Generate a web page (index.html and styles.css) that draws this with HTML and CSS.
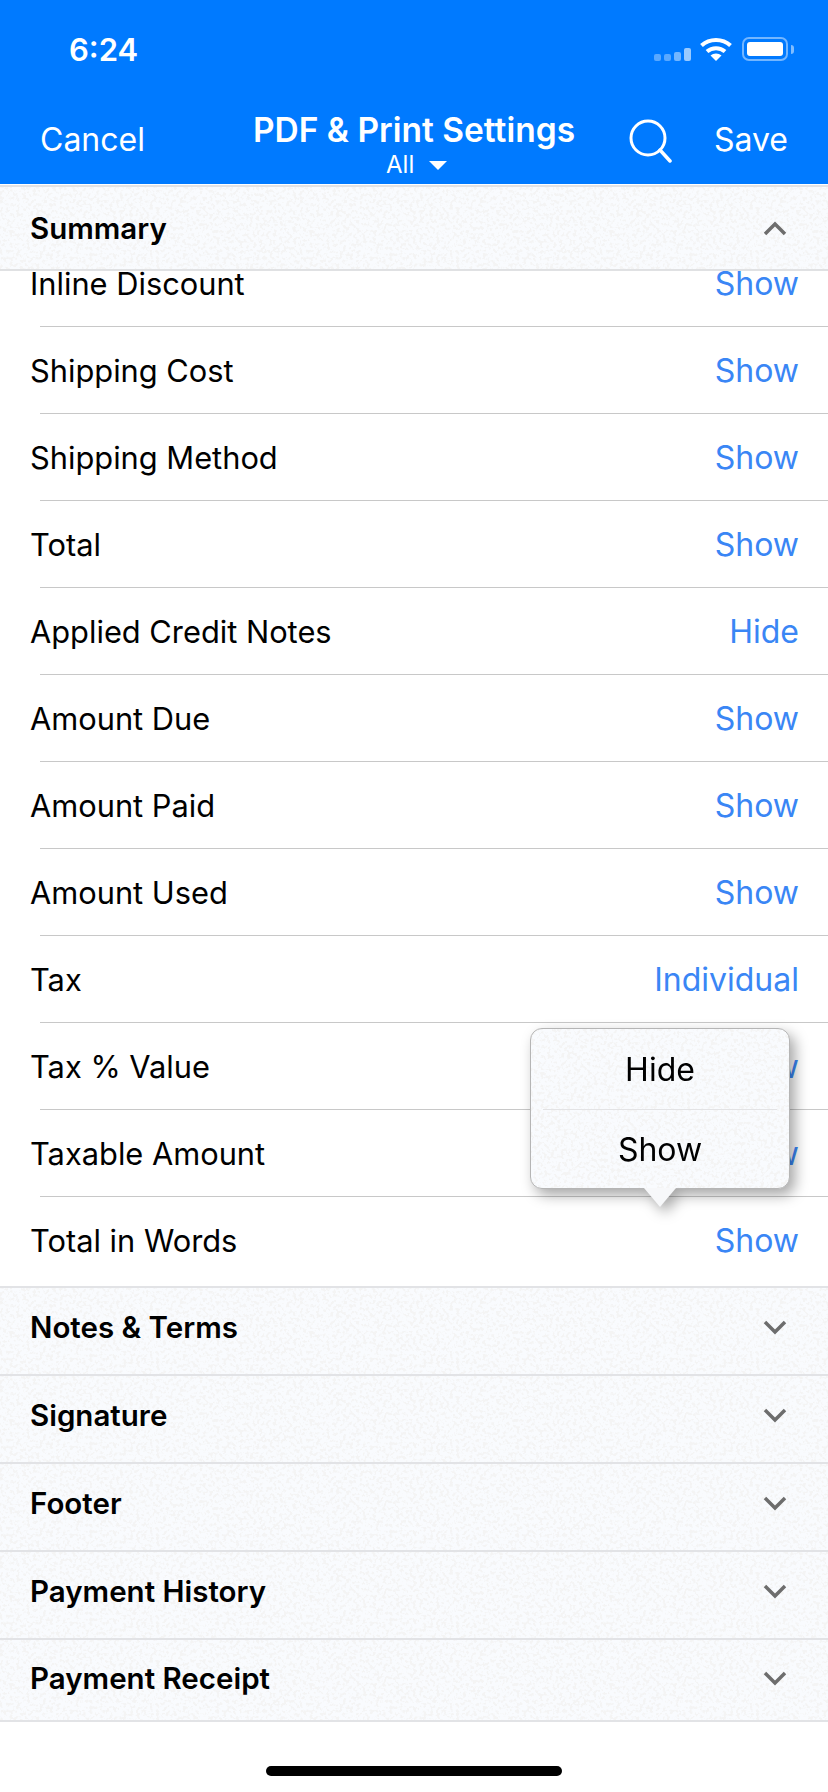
FILE: index.html
```html
<!DOCTYPE html>
<html>
<head>
    <meta charset="UTF-8">
    <meta name="viewport" content="width=device-width, initial-scale=1">
    <title>PDF &amp; Print Settings</title>
    <link rel="stylesheet" href="styles.css">
</head>
<body>
    <div class="screen">
        <header class="topbar">
            <div class="status">
                <span class="time">6:24</span>
                <div class="status-icons">
                    <svg class="signal" width="37" height="13" viewBox="0 0 37 13">
                        <rect x="0" y="6" width="7" height="7" rx="2" fill="#fff" opacity=".35"/>
                        <rect x="10" y="6" width="7" height="7" rx="2" fill="#fff" opacity=".35"/>
                        <rect x="20" y="4" width="7" height="9" rx="2" fill="#fff" opacity=".45"/>
                        <rect x="30" y="0" width="7" height="13" rx="2" fill="#fff" opacity=".6"/>
                    </svg>
                    <svg class="wifi" width="32" height="24" viewBox="0 0 32 24">
                        <path d="M1.5 8.5C9.5 1 22.5 1 30.5 8.5" fill="none" stroke="#fff" stroke-width="4"/>
                        <path d="M7 14.5C12 10 20 10 25 14.5" fill="none" stroke="#fff" stroke-width="4"/>
                        <path d="M16 24L10.500 18.500C13.500 15.800 18.500 15.800 21.500 18.500Z" fill="#fff"/>
                    </svg>
                    <div class="battery"><div class="battery-fill"></div></div>
                    <div class="battery-tip"></div>
                </div>
            </div>
            <nav class="navbar">
                <span class="nav-btn">Cancel</span>
                <div class="nav-title">
                    <div class="title-main">PDF &amp; Print Settings</div>
                    <div class="title-sub">All <span class="caret"></span></div>
                </div>
                <div class="nav-right">
                    <svg class="search" width="44" height="44" viewBox="0 0 44 44">
                        <circle cx="19" cy="19" r="17" fill="none" stroke="#fff" stroke-width="3"/>
                        <path d="M31 31L41 42" fill="none" stroke="#fff" stroke-width="3.500" stroke-linecap="round"/>
                    </svg>
                    <span class="nav-btn">Save</span>
                </div>
            </nav>
        </header>

        <div class="section-head summary-head">
            <span>Summary</span>
            <svg class="chev" width="24" height="16" viewBox="0 0 24 16"><path d="M2 14L12 4L22 14" /></svg>
        </div>

        <ul class="list">
            <li class="row first"><span>Inline Discount</span><span class="val">Show</span></li>
            <li class="row"><span>Shipping Cost</span><span class="val">Show</span></li>
            <li class="row"><span>Shipping Method</span><span class="val">Show</span></li>
            <li class="row"><span>Total</span><span class="val">Show</span></li>
            <li class="row"><span>Applied Credit Notes</span><span class="val">Hide</span></li>
            <li class="row"><span>Amount Due</span><span class="val">Show</span></li>
            <li class="row"><span>Amount Paid</span><span class="val">Show</span></li>
            <li class="row"><span>Amount Used</span><span class="val">Show</span></li>
            <li class="row"><span>Tax</span><span class="val">Individual</span></li>
            <li class="row"><span>Tax % Value</span><span class="val">Show</span></li>
            <li class="row"><span>Taxable Amount</span><span class="val">Show</span></li>
            <li class="row last"><span>Total in Words</span><span class="val">Show</span></li>
        </ul>

        <div class="section-head">
            <span>Notes &amp; Terms</span>
            <svg class="chev" width="24" height="16" viewBox="0 0 24 16"><path d="M2 3L12 13L22 3" /></svg>
        </div>
        <div class="section-head">
            <span>Signature</span>
            <svg class="chev" width="24" height="16" viewBox="0 0 24 16"><path d="M2 3L12 13L22 3" /></svg>
        </div>
        <div class="section-head">
            <span>Footer</span>
            <svg class="chev" width="24" height="16" viewBox="0 0 24 16"><path d="M2 3L12 13L22 3" /></svg>
        </div>
        <div class="section-head">
            <span>Payment History</span>
            <svg class="chev" width="24" height="16" viewBox="0 0 24 16"><path d="M2 3L12 13L22 3" /></svg>
        </div>
        <div class="section-head end-head">
            <span>Payment Receipt</span>
            <svg class="chev" width="24" height="16" viewBox="0 0 24 16"><path d="M2 3L12 13L22 3" /></svg>
        </div>

        <div class="home-wrap"><div class="home-bar"></div></div>

        <div class="popover">
            <div class="popover-box">
                <div class="popover-item">Hide</div>
                <div class="popover-sep"></div>
                <div class="popover-item">Show</div>
            </div>
            <div class="popover-arrow"></div>
        </div>
    </div>
</body>
</html>
```

FILE: styles.css
```css
* {
    box-sizing: border-box;
}

:root {
    --noise: url("data:image/svg+xml,%3Csvg xmlns='http://www.w3.org/2000/svg' width='300' height='300'%3E%3Cfilter id='n' color-interpolation-filters='sRGB'%3E%3CfeTurbulence type='fractalNoise' baseFrequency='.3' numOctaves='2' seed='7'/%3E%3CfeColorMatrix values='0 0 0 0 .955 0 0 0 0 .955 0 0 0 0 .955 7 0 0 0 -3.500'/%3E%3C/filter%3E%3Crect width='300' height='300' filter='url(%23n)'/%3E%3C/svg%3E");
}

body {
    margin: 0;
    background: #fff;
    font-family: Inter, "Liberation Sans", sans-serif;
    color: #000;
}

.screen {
    position: relative;
    width: 828px;
    height: 1792px;
    overflow: hidden;
}

.topbar {
    height: 184px;
    background-color: #007aff;
    color: #fff;
}

.status {
    height: 88px;
    display: flex;
    justify-content: space-between;
    align-items: flex-start;
    padding: 0 34px 0 69px;
}

.time {
    margin-top: 31px;
    font-size: 31px;
    line-height: 38px;
    font-weight: 600;
}

.status-icons {
    display: flex;
    align-items: flex-end;
    margin-top: 37px;
}

.signal {
    margin-right: 9px;
}

.wifi {
    margin-right: 10px;
}

.battery {
    width: 46px;
    height: 24px;
    padding: 3px;
    border: 2px solid rgba(255, 255, 255, .45);
    border-radius: 7px;
}

.battery-fill {
    height: 100%;
    background: #fff;
    border-radius: 3px;
}

.battery-tip {
    width: 3px;
    height: 9px;
    margin: 0 0 7px 3px;
    background: rgba(255, 255, 255, .5);
    border-radius: 0 3px 3px 0;
}

.navbar {
    height: 96px;
    display: grid;
    grid-template-columns: 1fr auto 1fr;
    align-items: start;
    padding: 0 40px;
}

.nav-btn {
    margin-top: 33px;
    font-size: 32px;
    line-height: 38px;
}

.nav-title {
    text-align: center;
    margin-top: 23px;
}

.title-main {
    font-size: 33.500px;
    line-height: 38px;
    font-weight: 600;
}

.title-sub {
    padding-left: 5px;
    margin-top: 2px;
    font-size: 24px;
    line-height: 28px;
}

.caret {
    display: inline-block;
    width: 0;
    height: 0;
    margin-left: 8px;
    vertical-align: 3px;
    border-left: 9px solid transparent;
    border-right: 9px solid transparent;
    border-top: 9px solid #fff;
}

.nav-right {
    display: flex;
    justify-content: flex-end;
    align-items: flex-start;
    gap: 41px;
}

.search {
    margin-top: 31px;
}

.section-head {
    height: 88px;
    display: flex;
    justify-content: space-between;
    align-items: center;
    padding: 0 41px 9px 30px;
    font-size: 29.500px;
    font-weight: 600;
    background-color: #f9fbfe;
    background-image: var(--noise);
    border-top: 2px solid #e2e3e6;
}

.summary-head {
    height: 86px;
    margin-top: 1px;
    padding: 0 41px 1px 30px;
    border-bottom: 2px solid #e0e1e3;
}

.end-head {
    height: 84px;
    padding-bottom: 4px;
    border-bottom: 2px solid #e2e3e6;
}

.chev {
    fill: none;
    stroke: #6d6d6d;
    stroke-width: 3.500;
}

.list {
    list-style: none;
    margin: 0;
    padding: 0;
}

.row {
    height: 87px;
    display: flex;
    justify-content: space-between;
    align-items: center;
    padding: 0 29px 0 30px;
    font-size: 30.800px;
    line-height: 24px;
    position: relative;
}

.row::after {
    content: "";
    position: absolute;
    left: 40px;
    right: 0;
    bottom: 0;
    height: 1px;
    background: #c8c8c8;
}

/* first row is scrolled under the Summary header */
.row.first {
    height: 56px;
    padding-bottom: 30px;
}

.row.last {
    height: 89px;
    padding-bottom: 2px;
}

.row.last::after {
    display: none;
}

.val {
    font-size: 32px;
    color: #3a86f5;
}

.home-wrap {
    padding-top: 44px;
    display: flex;
    justify-content: center;
}

.home-bar {
    width: 296px;
    height: 10px;
    background: #000;
    border-radius: 5px;
}

.popover {
    position: absolute;
    left: 530px;
    top: 1028px;
    width: 260px;
    filter: drop-shadow(5px 6px 7px rgba(0, 0, 0, .35));
}

.popover-box {
    height: 161px;
    padding-top: 1px;
    background-color: #f9fbfe;
    background-image: var(--noise);
    border: 1px solid #b5b5b5;
    border-radius: 12px;
}

.popover-item {
    height: 79px;
    display: flex;
    align-items: center;
    justify-content: center;
    font-size: 32px;
}

.popover-sep {
    height: 1px;
    margin: 0 12px;
    background: #e3e3e5;
}

.popover-arrow {
    width: 32px;
    height: 19px;
    margin: -1px auto 0;
    background: #f7f8fa;
    clip-path: polygon(0 0, 100% 0, 50% 100%);
}
```
